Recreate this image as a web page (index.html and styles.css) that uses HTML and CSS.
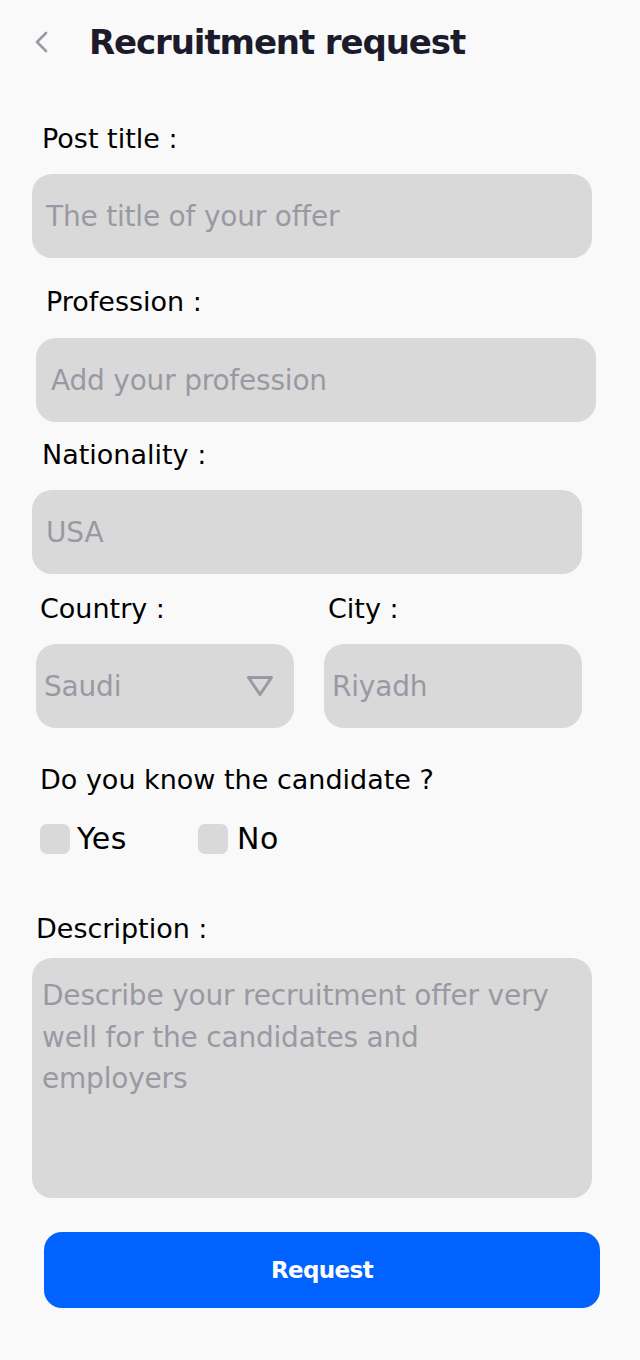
FILE: index.html
```html
<!DOCTYPE html>
<html lang="en">
<head>
<meta charset="utf-8">
<title>Recruitment request</title>
<link rel="stylesheet" href="styles.css">
</head>
<body>
<div class="screen">
  <header class="header">
    <svg class="back" width="14" height="22" viewBox="0 0 14 22"><path d="M12 2 L3 11 L12 20" fill="none" stroke="#9a99a3" stroke-width="2.6" stroke-linecap="round" stroke-linejoin="round"/></svg>
    <h1 class="title">Recruitment request</h1>
  </header>

  <div class="label l-post">Post title :</div>
  <div class="field f-post">The title of your offer</div>

  <div class="label l-prof">Profession :</div>
  <div class="field f-prof">Add your profession</div>

  <div class="label l-nat">Nationality :</div>
  <div class="field f-nat">USA</div>

  <div class="pair">
    <div class="col col-country">
      <div class="label">Country :</div>
      <div class="field small select">
        <span>Saudi</span>
        <svg class="tri" width="28" height="22" viewBox="0 0 28 22"><path d="M2.5 2.5 H25.5 L14 19.5 Z" fill="none" stroke="#9a99a3" stroke-width="3" stroke-linejoin="round"/></svg>
      </div>
    </div>
    <div class="col col-city">
      <div class="label">City :</div>
      <div class="field small">Riyadh</div>
    </div>
  </div>

  <div class="label l-know">Do you know the candidate ?</div>
  <div class="checks">
    <div class="check"><span class="box"></span><span class="opt">Yes</span></div>
    <div class="check"><span class="box"></span><span class="opt">No</span></div>
  </div>

  <div class="label l-desc">Description :</div>
  <div class="area">Describe your recruitment offer very well for the candidates and employers</div>

  <button class="btn">Request</button>
</div>
</body>
</html>
```

FILE: styles.css
```css
* { box-sizing: border-box; }
html, body { margin: 0; padding: 0; }
body {
  background: #f9f9f9;
  font-family: "DejaVu Sans", "Open Sans", sans-serif;
  width: 640px;
  height: 1360px;
  overflow: hidden;
}
.screen { display: flex; flex-direction: column; align-items: flex-start; }

.header {
  height: 84px;
  display: flex;
  align-items: center;
  padding-left: 34px;
}
.back { margin-right: 41px; }
.title {
  margin: 0;
  font-size: 34px;
  font-weight: 700;
  color: #1c1b2b;
  line-height: 40px;
  letter-spacing: -1.1px;
}

.label {
  font-size: 27px;
  line-height: 36px;
  color: #000;
  font-weight: 400;
}
.field {
  height: 84px;
  width: 560px;
  background: #d9d9d9;
  border-radius: 20px;
  display: flex;
  align-items: center;
  padding-left: 14px;
  font-size: 28px;
  color: #9a99a3;
  letter-spacing: -0.2px;
}

.l-post { margin: 37px 0 0 42px; }
.f-post { margin: 17px 0 0 32px; }
.l-prof { margin: 26px 0 0 46px; }
.f-prof { margin: 18px 0 0 36px; padding-left: 15px; }
.l-nat { margin: 15px 0 0 42px; }
.f-nat { margin: 17px 0 0 32px; width: 550px; }

.pair { display: flex; margin-top: 17px; }
.col-country { margin-left: 40px; width: 288px; }
.col .field { margin-top: 17px; }
.col-country .field { margin-left: -4px; }
.col-city .field { margin-left: -4px; }
.field.small { width: 258px; padding-left: 8px; }
.select { justify-content: space-between; padding-right: 20px; }

.l-know { margin: 34px 0 0 40px; }
.checks { display: flex; margin: 26px 0 0 40px; height: 30px; align-items: center; }
.check { display: flex; align-items: center; }
.check:first-child { width: 158px; }
.box { width: 30px; height: 30px; border-radius: 7px; background: #d9d9d9; }
.opt { font-size: 30px; font-weight: 400; color: #000; margin-left: 7px; line-height: 32px; letter-spacing: 0.5px; }
.check + .check .opt { margin-left: 9px; }

.l-desc { margin: 57px 0 0 36px; }
.area {
  margin: 11px 0 0 32px;
  width: 560px;
  height: 240px;
  background: #d9d9d9;
  border-radius: 20px;
  padding: 17px 24px 0 10px;
  font-size: 28px;
  line-height: 41.5px;
  color: #9a99a3;
  letter-spacing: -0.2px;
}

.btn {
  margin: 34px 0 0 44px;
  width: 556px;
  height: 76px;
  border: 0;
  border-radius: 18px;
  background: #0062ff;
  color: #fff;
  font-family: inherit;
  font-size: 23px;
  font-weight: 700;
  letter-spacing: -0.6px;
}
```
